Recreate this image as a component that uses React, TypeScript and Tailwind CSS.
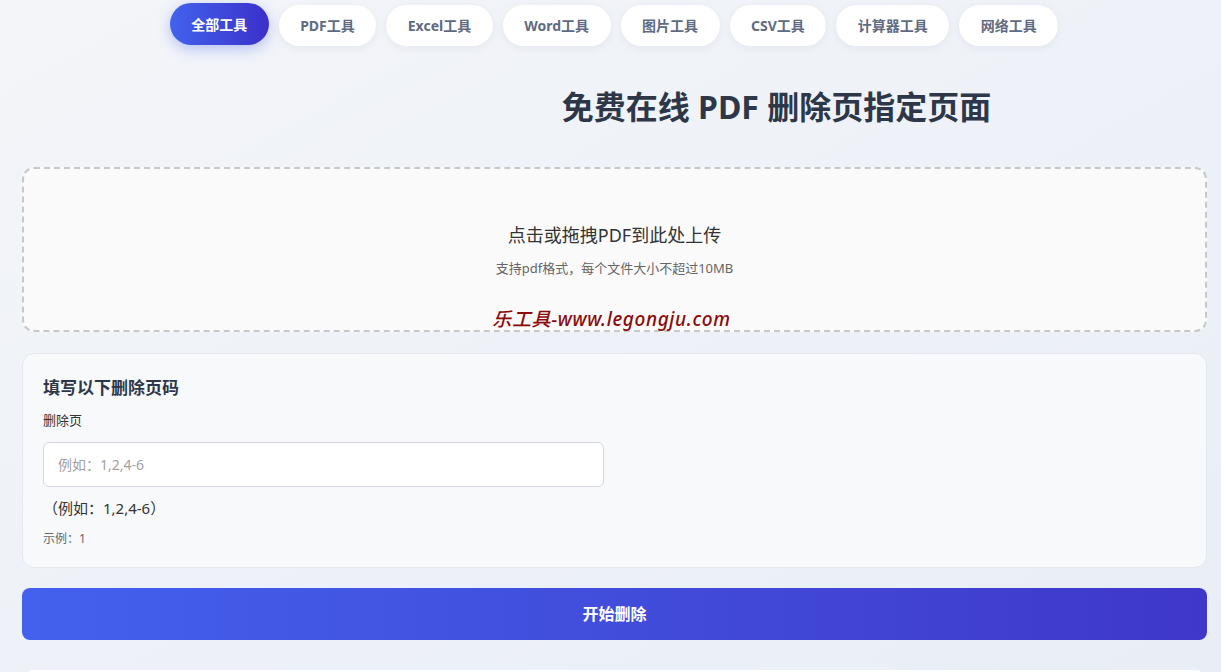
import React from "react";

const tools = ["全部工具", "PDF工具", "Excel工具", "Word工具", "图片工具", "CSV工具", "计算器工具", "网络工具"];

const font = { fontFamily: '"Noto Sans", "Noto Sans CJK SC", sans-serif' };

export default function App() {
  return (
    <div
      className="h-screen w-full overflow-hidden bg-gradient-to-br from-[#f3f5f9] to-[#e9eef6] text-[#333]"
      style={font}
    >
      <nav className="flex justify-center gap-[10px] pt-[5px] pl-[7px]">
        {tools.map((t, i) =>
          i === 0 ? (
            <button
              key={t}
              className="-mt-[2px] h-[42px] rounded-full bg-gradient-to-r from-[#4361ee] to-[#3a2fc9] px-[21.5px] text-[14px] font-bold text-white shadow-[0_4px_14px_rgba(67,97,238,0.35)]"
            >
              {t}
            </button>
          ) : (
            <button
              key={t}
              className="h-[41px] rounded-full bg-white px-[21.5px] text-[14px] font-bold text-[#5f6b82] shadow-[0_2px_8px_rgba(30,40,80,0.06)]"
            >
              {t}
            </button>
          )
        )}
      </nav>

      <main className="pl-[22px] pr-[14px] pt-[41px] pb-8">
        <h1 className="flex justify-center pl-[324px] text-[32px] font-bold leading-[40px] text-[#2d3748]">
          免费在线 PDF 删除页指定页面
        </h1>

        <div className="mt-[40px] flex h-[165px] flex-col items-center rounded-[12px] border-2 border-dashed border-[#c8c8c8] bg-[#fafafa]">
          <p className="mt-[53px] text-[18px] leading-[26px] text-[#333]">点击或拖拽PDF到此处上传</p>
          <p className="mt-[10px] text-[13px] leading-[20px] text-[#666]">支持pdf格式，每个文件大小不超过10MB</p>
          <p className="mt-[29px] mr-[6px] text-[19px] italic font-medium leading-[24px] tracking-[0.6px] text-[#8b0a0a]">
            乐工具-www.legongju.com
          </p>
        </div>

        <section className="mt-[21px] rounded-[12px] border border-[#e4e8ee] bg-[#f8f9fb] px-[20px] pt-[22px] pb-[19px]">
          <h2 className="text-[17px] font-bold leading-[24px] text-[#2d3748]">填写以下删除页码</h2>
          <label className="mt-[10px] block text-[13px] leading-[20px] text-[#333]">删除页</label>
          <input
            className="mt-[12px] h-[45px] w-[561px] rounded-[6px] border border-[#d3d6dc] bg-white px-[14px] text-[14px] outline-none placeholder:text-[#a0a0a0]"
            placeholder="例如：1,2,4-6"
          />
          <p className="mt-[9px] text-[15px] leading-[24px] text-[#333]">（例如：1,2,4-6）</p>
          <p className="mt-[10px] text-[12px] leading-[18px] text-[#666]">示例：1</p>
        </section>

        <button className="mt-[20px] h-[52px] w-full rounded-[8px] bg-gradient-to-r from-[#4361ee] to-[#3f37c9] text-[16px] font-bold text-white">
          开始删除
        </button>

        <div className="mt-[30px] h-[60px] rounded-[12px] bg-white" />
      </main>
    </div>
  );
}
